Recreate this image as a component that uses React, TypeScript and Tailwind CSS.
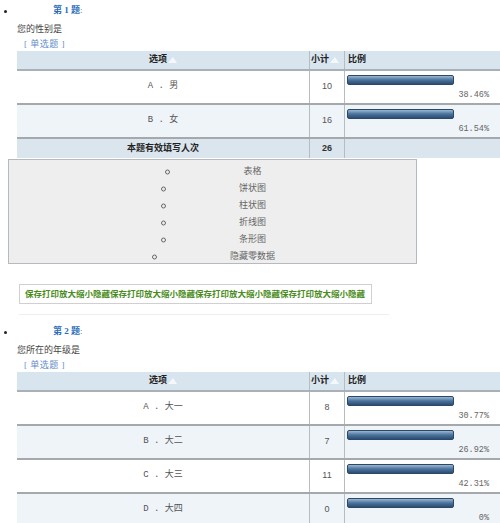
import React from "react";

const FONT = { fontFamily: '"Liberation Serif", "Noto Sans CJK SC", serif' };

function SortArrow() {
  return (
    <svg width="9" height="6" viewBox="0 0 9 6" className="inline-block ml-[1px] align-middle">
      <polygon points="0,6 9,6 5,0" fill="#f4f8fb" />
    </svg>
  );
}

function Bar() {
  return (
    <div className="w-[107px] h-[10px] rounded-[2px] border border-[#2d4865] bg-gradient-to-b from-[#9bb8d4] via-[#4a739c] to-[#2c4d72]" />
  );
}

type Row = { label: string; count: string; pct: string };

function Table({ rows, total }: { rows: Row[]; total?: string }) {
  return (
    <div className="ml-[17px] w-[500px] text-[9px]">
      <div className="flex h-[20px] bg-[#d8e4ee] border-b-2 border-[#a9b1b8]">
        <div className="w-[293px] border-r border-[#b5bcc2] flex items-center justify-center font-bold text-[#222]">
          选项<SortArrow />
        </div>
        <div className="w-[35px] border-r border-[#b5bcc2] flex items-center pl-[1px] font-bold text-[#222]">
          小计<SortArrow />
        </div>
        <div className="flex-1 flex items-center pl-[3px] font-bold text-[#222]">比例</div>
      </div>
      {rows.map((r, i) => (
        <div
          key={r.label}
          className={`flex h-[34px] border-b-2 border-[#a5a9ad] ${i % 2 === 1 ? "bg-[#eff4f9]" : "bg-white"}`}
        >
          <div className="w-[293px] border-r border-[#b5bcc2] flex items-center justify-center text-[#555]">
            <span style={{ fontFamily: '"Liberation Mono", "Noto Sans CJK SC", monospace' }}>{r.label}</span>
          </div>
          <div
            className="w-[35px] border-r border-[#b5bcc2] flex items-center justify-center text-[#555]"
            style={{ fontFamily: '"Liberation Sans", sans-serif' }}
          >
            {r.count}
          </div>
          <div className="flex-1 flex flex-col pl-[2px] pt-[4px]">
            <Bar />
            <div
              className="w-[142px] text-right text-[#666] mt-[4px]"
              style={{ fontFamily: '"Liberation Mono", monospace', fontSize: "8.5px" }}
            >
              {r.pct}
            </div>
          </div>
        </div>
      ))}
      {total && (
        <div className="flex h-[19px] bg-[#dae5ee]">
          <div className="w-[293px] border-r border-[#b5bcc2] flex items-center justify-center font-bold text-[#222]">
            本题有效填写人次
          </div>
          <div
            className="w-[35px] border-r border-[#b5bcc2] flex items-center justify-center font-bold text-[#333]"
            style={{ fontFamily: '"Liberation Sans", sans-serif' }}
          >
            {total}
          </div>
          <div className="flex-1" />
        </div>
      )}
    </div>
  );
}

function Header({ n, question }: { n: number; question: string }) {
  return (
    <>
      <div className="relative h-[22px] flex items-center">
        <span className="absolute left-[4px] top-[10px] w-[3px] h-[3px] rounded-full bg-[#222]" />
        <span className="ml-[53px] font-bold text-[#2a6cb8] text-[9px]">
          第 {n} 题<span className="font-normal text-[#666]">:</span>
        </span>
      </div>
      <div className="h-[16px] pl-[17px] flex items-center text-[9px] text-[#444]">{question}</div>
      <div className="h-[13px] pl-[24px] flex items-start text-[9px] text-[#5f8ccc] leading-[12px] tracking-[0.5px]">
        [ 单选题 ]
      </div>
    </>
  );
}

const charts = ["表格", "饼状图", "柱状图", "折线图", "条形图", "隐藏零数据"];

export default function App() {
  return (
    <div className="w-[500px] h-[523px] overflow-hidden bg-white relative" style={FONT}>
      <Header n={1} question="您的性别是" />
      <Table
        rows={[
          { label: "A . 男", count: "10", pct: "38.46%" },
          { label: "B . 女", count: "16", pct: "61.54%" },
        ]}
        total="26"
      />
      <div className="ml-[8px] w-[409px] h-[105px] mt-[1px] border border-[#b4b9c2] bg-[#eeeeee] pt-[3px] pl-[80px] text-[9px] text-[#666]">
        {charts.map((c) => (
          <div key={c} className="h-[17px] flex items-center justify-center">
            <span className="relative">
              <span className="absolute left-[-78px] top-1/2 -translate-y-1/2 w-[5px] h-[5px] rounded-full border border-[#666]" />
              {c}
            </span>
          </div>
        ))}
      </div>
      <div className="ml-[19px] mt-[20px] w-[353px] h-[20px] border border-[#d0d0d0] flex items-center pl-[5px] text-[8.5px] font-bold text-[#4a8c1c] whitespace-nowrap">
        保存打印放大缩小隐藏保存打印放大缩小隐藏保存打印放大缩小隐藏保存打印放大缩小隐藏
      </div>
      <div className="ml-[19px] mt-[10px] w-[370px] h-px bg-[#eeeeee]" />
      <div className="mt-[6px]">
        <Header n={2} question="您所在的年级是" />
        <Table
          rows={[
            { label: "A . 大一", count: "8", pct: "30.77%" },
            { label: "B . 大二", count: "7", pct: "26.92%" },
            { label: "C . 大三", count: "11", pct: "42.31%" },
            { label: "D . 大四", count: "0", pct: "0%" },
          ]}
        />
      </div>
    </div>
  );
}
